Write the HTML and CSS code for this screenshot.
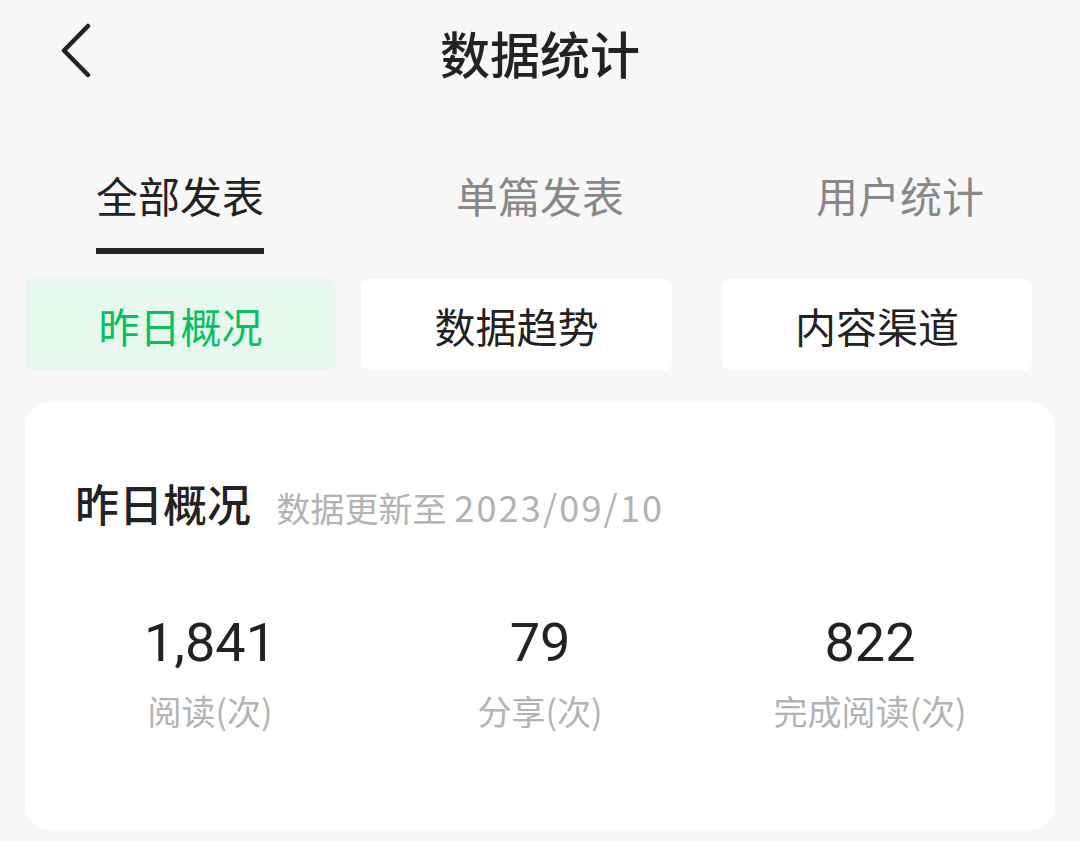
FILE: index.html
```html
<!DOCTYPE html>
<html lang="zh-CN">
<head>
  <meta charset="UTF-8">
  <meta name="viewport" content="width=device-width, initial-scale=1.0">
  <title>数据统计</title>
  <link rel="stylesheet" href="styles.css">
</head>
<body>
  <div class="header">
    <svg class="back" width="40" height="56" viewBox="0 0 40 56">
      <polyline points="30,3 6,27.5 30,52" fill="none" stroke="#222" stroke-width="4.5" stroke-linecap="round" stroke-linejoin="round"/>
    </svg>
    <h1>数据统计</h1>
  </div>

  <div class="tabs">
    <div class="tab active"><span>全部发表</span></div>
    <div class="tab"><span>单篇发表</span></div>
    <div class="tab"><span>用户统计</span></div>
  </div>

  <div class="segments">
    <div class="seg active">昨日概况</div>
    <div class="seg">数据趋势</div>
    <div class="seg far">内容渠道</div>
  </div>

  <div class="card">
    <div class="card-title">
      <span class="name">昨日概况</span>
      <span class="sub">数据更新至 <span class="date">2023/09/10</span></span>
    </div>
    <div class="stats">
      <div class="stat">
        <div class="num">1,841</div>
        <div class="label">阅读(次)</div>
      </div>
      <div class="stat">
        <div class="num">79</div>
        <div class="label">分享(次)</div>
      </div>
      <div class="stat">
        <div class="num">822</div>
        <div class="label">完成阅读(次)</div>
      </div>
    </div>
  </div>
</body>
</html>
```

FILE: styles.css
```css
body {
  margin: 0;
  background: #f7f7f7;
  color: #222;
  font-family: "Noto Sans CJK SC", "Noto Sans", sans-serif;
  width: 1080px;
  height: 841px;
  overflow: hidden;
}
.header {
  height: 104px;
  display: flex;
  align-items: center;
  justify-content: center;
  position: relative;
}
.header .back {
  position: absolute;
  left: 58px;
  top: 23px;
}
.header h1 {
  margin: 0;
  font-size: 50px;
  font-weight: 500;
  line-height: 104px;
}
.tabs {
  display: flex;
  margin-top: 61px;
}
.tab {
  flex: 1;
  display: flex;
  justify-content: center;
  font-size: 42px;
  line-height: 60px;
  color: #888;
}
.tab span {
  display: block;
  padding-bottom: 23px;
  border-bottom: 6px solid transparent;
}
.tab.active {
  color: #222;
}
.tab.active span {
  border-bottom-color: #222;
}
.segments {
  display: flex;
  gap: 25px;
  padding-left: 25px;
  margin-top: 25px;
}
.seg {
  width: 311px;
  height: 91px;
  background: #fff;
  border-radius: 8px;
  display: flex;
  align-items: center;
  justify-content: center;
  font-size: 41px;
  color: #222;
}
.seg.active {
  background: #e6f8ee;
  color: #07c160;
}
.seg.far {
  margin-left: 25px;
  width: 310px;
}
.card {
  margin: 32px 0 0 25px;
  width: 1030px;
  height: 428px;
  box-sizing: border-box;
  background: #fff;
  border-radius: 24px;
  padding: 71px 20px 0 50px;
}
.card-title {
  line-height: 60px;
}
.card-title .name {
  font-size: 44px;
  font-weight: 500;
}
.card-title .sub {
  font-size: 34px;
  color: #b2b2b2;
  margin-left: 22px;
}
.card-title .date {
  font-size: 36px;
  letter-spacing: 2.2px;
}
.stats {
  display: flex;
  margin: 63px 0 0 -30px;
}
.stat {
  width: 330px;
  text-align: center;
}
.num {
  font-family: Roboto, "Noto Sans", sans-serif;
  font-size: 54px;
  line-height: 70px;
  color: #222;
}
.label {
  margin-top: 8px;
  font-size: 34px;
  line-height: 50px;
  color: #b3b3b3;
}
```
